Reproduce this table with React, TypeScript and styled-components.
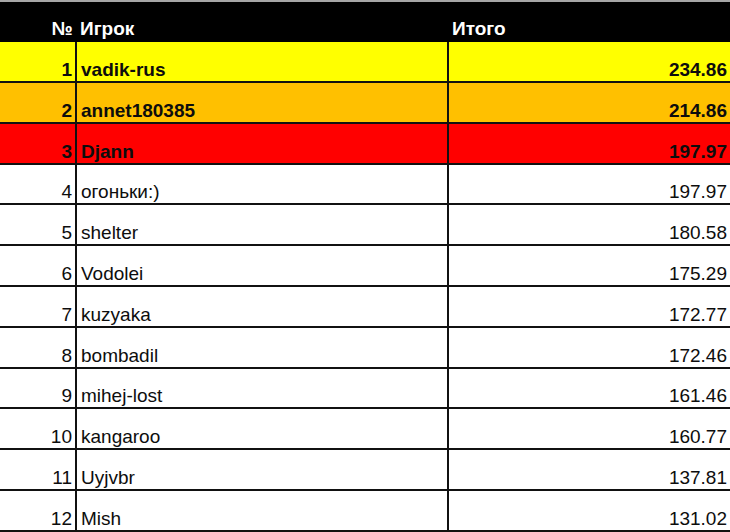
import React from 'react';
import styled, { createGlobalStyle, css } from 'styled-components';

const GlobalStyle = createGlobalStyle`
  html, body {
    margin: 0;
    padding: 0;
    background: #ffffff;
  }
  body {
    font-family: "Liberation Sans", Arial, sans-serif;
    overflow: hidden;
  }
`;

type Tone = 'gold' | 'silver' | 'bronze' | 'plain';

interface Player {
  place: number;
  name: string;
  total: string;
}

const players: Player[] = [
  { place: 1, name: 'vadik-rus', total: '234.86' },
  { place: 2, name: 'annet180385', total: '214.86' },
  { place: 3, name: 'Djann', total: '197.97' },
  { place: 4, name: 'огоньки:)', total: '197.97' },
  { place: 5, name: 'shelter', total: '180.58' },
  { place: 6, name: 'Vodolei', total: '175.29' },
  { place: 7, name: 'kuzyaka', total: '172.77' },
  { place: 8, name: 'bombadil', total: '172.46' },
  { place: 9, name: 'mihej-lost', total: '161.46' },
  { place: 10, name: 'kangaroo', total: '160.77' },
  { place: 11, name: 'Uyjvbr', total: '137.81' },
  { place: 12, name: 'Mish', total: '131.02' },
];

const toneColors: Record<Tone, string> = {
  gold: '#ffff00',
  silver: '#ffc000',
  bronze: '#ff0000',
  plain: '#ffffff',
};

const Sheet = styled.div`
  width: 730px;
  height: 532px;
  overflow: hidden;
  border-top: 2px solid #a6a6a6;
  box-sizing: border-box;
`;

const Grid = styled.div`
  display: grid;
  grid-template-columns: 77px 372px 1fr;
`;

const HeaderCell = styled.div<{ align?: 'left' | 'right' }>`
  height: 40px;
  background: #000000;
  color: #ffffff;
  font-size: 19px;
  font-weight: bold;
  line-height: 20px;
  display: flex;
  align-items: flex-end;
  justify-content: ${({ align }) => (align === 'right' ? 'flex-end' : 'flex-start')};
  padding: 0 4px 3px 3px;
  box-sizing: border-box;
  white-space: nowrap;
`;

const Cell = styled.div<{ tone: Tone; short?: boolean; align?: 'left' | 'right'; divider?: boolean }>`
  height: ${({ short }) => (short ? 40 : 41)}px;
  background: ${({ tone }) => toneColors[tone]};
  color: #0d0d0d;
  font-size: 19px;
  line-height: 20px;
  display: flex;
  align-items: flex-end;
  justify-content: ${({ align }) => (align === 'right' ? 'flex-end' : 'flex-start')};
  padding: 0 3px 1px 4px;
  box-sizing: border-box;
  border-bottom: 2px solid #111111;
  white-space: nowrap;

  ${({ divider }) =>
    divider &&
    css`
      border-right: 2px solid #111111;
    `}

  ${({ tone }) =>
    tone !== 'plain' &&
    css`
      font-weight: bold;
    `}
`;

const toneFor = (place: number): Tone => {
  if (place === 1) return 'gold';
  if (place === 2) return 'silver';
  if (place === 3) return 'bronze';
  return 'plain';
};

export default function App() {
  return (
    <>
      <GlobalStyle />
      <Sheet>
        <Grid>
          <HeaderCell align="right">№</HeaderCell>
          <HeaderCell>Игрок</HeaderCell>
          <HeaderCell>Итого</HeaderCell>
          {players.map((p, i) => {
            const tone = toneFor(p.place);
            const short = i % 5 === 3;
            return (
              <React.Fragment key={p.place}>
                <Cell tone={tone} short={short} align="right" divider>
                  {p.place}
                </Cell>
                <Cell tone={tone} short={short} divider>
                  {p.name}
                </Cell>
                <Cell tone={tone} short={short} align="right">
                  {p.total}
                </Cell>
              </React.Fragment>
            );
          })}
        </Grid>
      </Sheet>
    </>
  );
}
